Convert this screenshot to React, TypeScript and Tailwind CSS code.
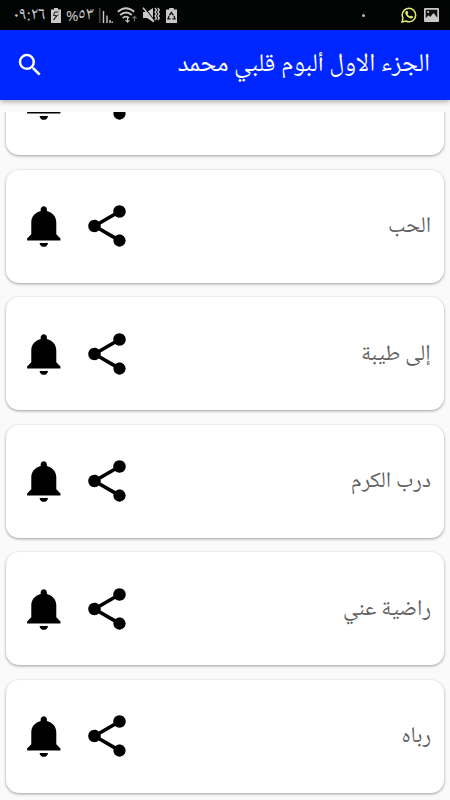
import React from "react";

const songs = ["", "الحب", "إلى طيبة", "درب الكرم", "راضية عني", "رباه"];
const arabic = "font-['Noto_Naskh_Arabic_UI','Noto_Sans_Arabic','Noto_Sans','DejaVu_Sans',sans-serif]";

function Bell() {
  return (
    <svg viewBox="0 0 24 24" className="size-[50px] shrink-0" fill="#000">
      <path d="M11.9 22c1.1 0 2-.9 2-1.9h-4c0 1 .89 1.9 2 1.9z" />
      <path d="M17.9 16v-5.8c0-2.7-1.9-4.7-4.5-5.4V4c0-.83-.67-1.5-1.5-1.5s-1.5.67-1.5 1.5v.8C7.8 5.5 5.9 7.5 5.9 10.2V16l-2 2v.9h16V18l-2-2z" />
    </svg>
  );
}

function Share() {
  return (
    <svg viewBox="0 0 24 24" className="ml-[13px] size-[50px] shrink-0" fill="#000">
      <path d="M18 16.08c-.76 0-1.44.3-1.96.77L8.91 12.7c.05-.23.09-.46.09-.7s-.04-.47-.09-.7l7.05-4.11c.54.5 1.25.81 2.04.81 1.66 0 3-1.34 3-3s-1.34-3-3-3-3 1.34-3 3c0 .24.04.47.09.7L8.04 9.81C7.5 9.31 6.79 9 6 9c-1.66 0-3 1.34-3 3s1.34 3 3 3c.79 0 1.5-.31 2.04-.81l7.12 4.16c-.05.21-.08.43-.08.65 0 1.61 1.31 2.92 2.92 2.92s2.92-1.31 2.92-2.92-1.31-2.92-2.92-2.92z" />
    </svg>
  );
}

function StatusBar() {
  return (
    <div className="flex h-[30px] shrink-0 items-center bg-[#020504] text-[#c9c9c9]">
      <span dir="rtl" className={`ml-[13px] w-[33px] whitespace-nowrap text-[18px] leading-none ${arabic}`}>٠٩:٢٦</span>
      <svg className="ml-[5px] h-[15px] w-[10px]" viewBox="0 0 10 15">
        <path d="M3 0h4v1.5h3V15H0V1.5h3z" fill="#c9c9c9" />
        <path d="M7.5 4H3.8L2.5 7.5h3L2.5 12 7.5 6.5" fill="none" stroke="#222" strokeWidth="1" />
      </svg>
      <span dir="ltr" className={`ml-[5px] flex w-[28px] items-center whitespace-nowrap leading-none ${arabic}`}><span className="text-[15px]">%</span><span className="text-[18px]">٥٣</span></span>
      <svg className="ml-[5px] h-[15px] w-[14px]" viewBox="0 0 14 15">
        <path d="M.8 0v15" stroke="#555" strokeWidth="1.2" />
        <path d="M4.5 3v12M8 7.5V15M11 12v3M13.2 13.5V15" stroke="#c9c9c9" strokeWidth="1.4" />
      </svg>
      <svg className="ml-[4px] h-[17px] w-[20px]" viewBox="0 0 20 17" fill="none" stroke="#c9c9c9" strokeWidth="1.8">
        <path d="M.8 4.8Q9 -2.4 17.2 4.8M3.2 8Q9 3 14.8 8M5.7 11Q9 8.2 12 11" />
        <path d="M10.5 10.8v4M8.5 13l2 2.2 2-2.2" strokeWidth="1.1" />
        <path d="M17.5 14.5v-5m-2 2 2-2.2 2 2.2" stroke="#666" strokeWidth="1.2" />
      </svg>
      <svg className="ml-[5px] h-[16px] w-[18px]" viewBox="0 0 18 16">
        <path d="M1 5h4l6-4v14L5 11H1z" fill="#c9c9c9" />
        <path d="m2.5 .5 10 13" stroke="#050505" strokeWidth="1.1" />
        <path d="m1 .8 11 14" stroke="#c9c9c9" strokeWidth="1.4" />
        <path d="m13 1 1.5 2-1.5 2 1.5 2-1.5 2 1.5 2-1.5 2M15.8 1l1.5 2-1.5 2 1.5 2-1.5 2 1.5 2-1.5 2" fill="none" stroke="#c9c9c9" strokeWidth="1.3" />
      </svg>
      <svg className="ml-[6px] h-[15px] w-[11px]" viewBox="0 0 11 15">
        <path d="M3.2 0h4.6v1.6H11V15H0V1.6h3.2z" fill="#c9c9c9" />
        <path d="m3.4 7.3 2-3 2 3M8 8l1 2.8H6.4M4.6 10.8H2L3 8" fill="none" stroke="#111" strokeWidth="1.3" />
      </svg>
      <span className="ml-auto mr-[36px] size-[3px] rounded-full bg-[#b5b5b5]" />
      <svg className="mr-[7px] size-[16px]" viewBox="0 0 16 16">
        <path d="M1 15l1-3.8A6.7 6.7 0 1 1 4.8 14z" fill="none" stroke="#e3ec70" strokeWidth="1.5" />
        <path d="M5.2 4.1 6.5 4l.8 2-.8 1c.6 1.2 1.4 1.9 2.6 2.5l.9-1 2 1c.1 1.4-1 2.2-2.2 2-2.8-.6-5.2-3-5.6-5.4 0-.8.3-1.5 1-2z" fill="#e3ec70" />
      </svg>
      <svg className="mr-[11px] h-[14px] w-[15px]" viewBox="0 0 15 14">
        <rect width="15" height="14" rx="1" fill="#c9c9c9" />
        <path d="M1.7 1.7h11.6v8L9.5 5 6.2 9 4.5 7.2l-2.8 3z" fill="#111" />
        <circle cx="4.1" cy="4" r="1.1" fill="#c9c9c9" />
      </svg>
    </div>
  );
}

export default function App() {
  return (
    <div className="flex h-[800px] w-[450px] flex-col overflow-hidden bg-[#fafafa]">
      <StatusBar />
      <header className="z-10 flex h-[70px] shrink-0 items-center justify-between bg-[#0026ff] pl-[14.5px] pr-[20px] shadow-[0_2px_5px_rgba(0,0,0,0.3)]">
        <svg viewBox="0 0 24 24" className="size-[30px]" fill="#fff">
          <path d="M15.5 14h-.79l-.28-.27A6.47 6.47 0 0 0 16 9.5 6.5 6.5 0 1 0 9.5 16c1.61 0 3.09-.59 4.23-1.57l.27.28v.79l5 4.99L20.49 19l-4.99-5zm-6 0C7.01 14 5 11.99 5 9.5S7.01 5 9.5 5 14 7.01 14 9.5 11.99 14 9.5 14z" />
        </svg>
        <h1 dir="rtl" className={`whitespace-nowrap pb-[2px] text-[25.2px] leading-[30px] text-white ${arabic}`}>الجزء الاول ألبوم قلبي محمد</h1>
      </header>
      <main className="mt-[12px] min-h-0 flex-1 overflow-hidden">
        <div className="-mt-[70px] flex flex-col gap-[14.6px] px-[6px]">
          {songs.map((s, i) => (
            <div key={i} className="flex h-[113px] shrink-0 items-center rounded-[13px] bg-white pl-[12.5px] pr-[13px] shadow-[0_1px_3px_rgba(0,0,0,0.38)]">
              <Bell />
              <Share />
              <span dir="rtl" className={`ml-auto whitespace-nowrap pt-[2px] text-[22.3px] leading-[28px] text-[#606060] ${arabic}`}>{s}</span>
            </div>
          ))}
        </div>
      </main>
    </div>
  );
}
